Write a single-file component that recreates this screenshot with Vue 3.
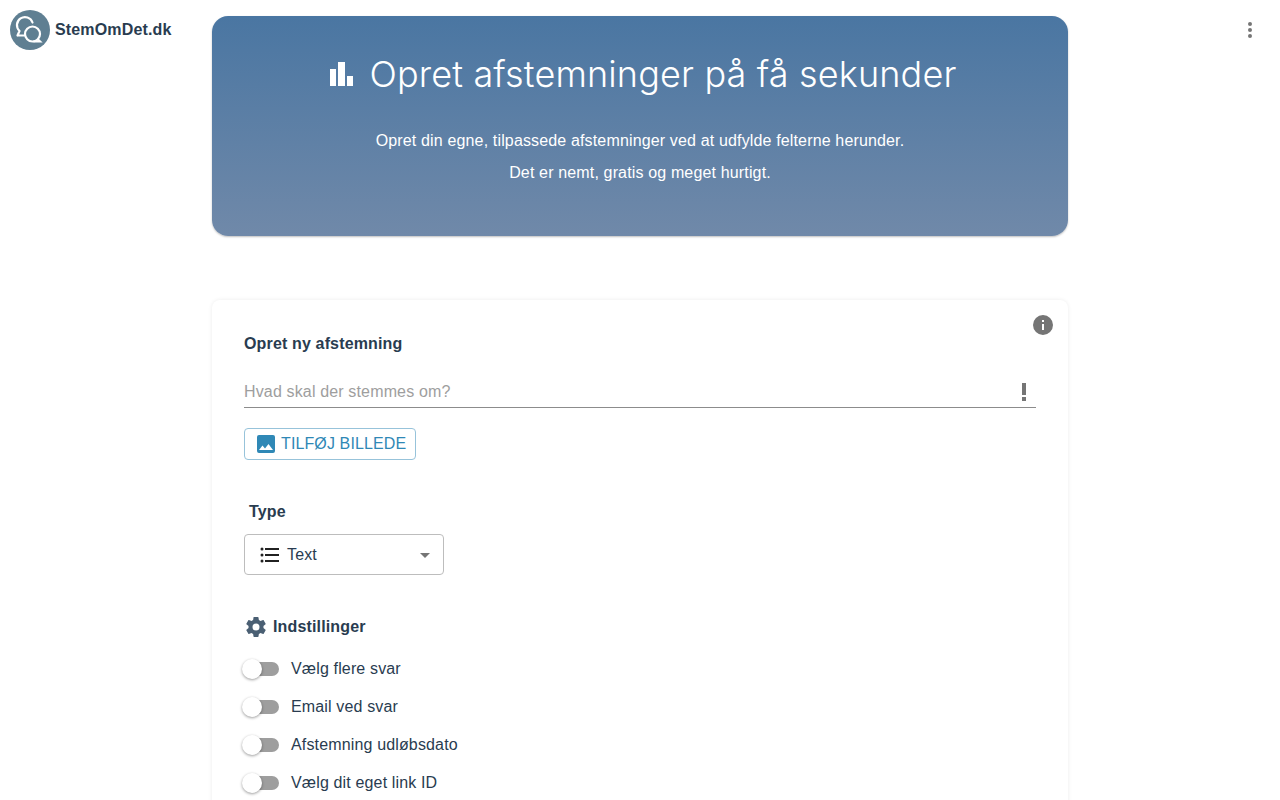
<script setup>
const toggles = ['Vælg flere svar', 'Email ved svar', 'Afstemning udløbsdato', 'Vælg dit eget link ID']
</script>

<template>
  <div class="page">
    <aside class="brand">
      <span class="logo">
        <svg viewBox="0 0 40 40" width="40" height="40">
          <circle cx="20" cy="20" r="20" fill="#5f7f92" />
          <path d="M9.500 21a8 8 0 1 1 13-8.500M7.500 25.500l2-4.500M7.500 25.500h6.500" fill="none" stroke="#fff" stroke-width="2.200" stroke-linecap="round" />
          <circle cx="22.500" cy="24" r="7.500" fill="none" stroke="#fff" stroke-width="2.200" />
          <path d="M28 29.500l2 2h-6" fill="none" stroke="#fff" stroke-width="2.200" stroke-linecap="round" />
        </svg>
      </span>
      <span class="brand-name">StemOmDet.dk</span>
    </aside>

    <main class="main">
      <section class="hero">
        <h1 class="hero-title">
          <svg viewBox="0 0 23 24" width="23" height="24"><path fill="#fff" d="M0 7h6v17H0zM8 0h7v24H8zM17 14h6v10h-6z" /></svg>
          <span>Opret afstemninger på få sekunder</span>
        </h1>
        <p class="hero-line">Opret din egne, tilpassede afstemninger ved at udfylde felterne herunder.</p>
        <p class="hero-line">Det er nemt, gratis og meget hurtigt.</p>
      </section>

      <section class="card">
        <svg class="info" viewBox="0 0 24 24" width="24" height="24"><path fill="#757575" d="M12 2a10 10 0 1 0 0 20 10 10 0 0 0 0-20zm1 15h-2v-6h2zm0-8h-2V7h2z" /></svg>
        <h2 class="card-title">Opret ny afstemning</h2>

        <div class="field">
          <span class="placeholder">Hvad skal der stemmes om?</span>
          <svg viewBox="0 0 24 24" width="24" height="24"><path fill="#757575" d="M10 3h4v12h-4zM10 17h4v4h-4z" /></svg>
        </div>

        <button class="add-image" type="button">
          <svg viewBox="0 0 24 24" width="24" height="24"><path fill="#2f88b6" d="M21 19V5a2 2 0 0 0-2-2H5a2 2 0 0 0-2 2v14a2 2 0 0 0 2 2h14a2 2 0 0 0 2-2zM8.500 13.500l2.500 3 3.500-4.500 4.500 6H5z" /></svg>
          <span>TILFØJ BILLEDE</span>
        </button>

        <h3 class="type-label">Type</h3>
        <div class="select">
          <svg viewBox="0 0 24 24" width="24" height="24"><path fill="#212121" d="M7 5h14v2H7zM7 11h14v2H7zM7 17h14v2H7z" /><circle cx="4" cy="6" r="1.500" fill="#212121" /><circle cx="4" cy="12" r="1.500" fill="#212121" /><circle cx="4" cy="18" r="1.500" fill="#212121" /></svg>
          <span class="select-text">Text</span>
          <svg class="caret" viewBox="0 0 24 24" width="24" height="24"><path fill="#757575" d="M7 10l5 5 5-5z" /></svg>
        </div>

        <div class="settings-title">
          <svg viewBox="0 0 24 24" width="24" height="24"><path fill="#4a5f73" d="M19.430 12.980c.04-.32.070-.64.070-.98s-.03-.66-.07-.98l2.110-1.650c.19-.15.240-.42.120-.64l-2-3.460c-.12-.22-.39-.3-.61-.22l-2.490 1c-.52-.4-1.080-.73-1.690-.98l-.38-2.650A.49.49 0 0 0 14 2h-4c-.25 0-.46.18-.49.420l-.38 2.650c-.61.250-1.170.59-1.690.98l-2.490-1c-.23-.09-.49 0-.61.220l-2 3.460c-.13.220-.07.490.12.640l2.110 1.650c-.04.320-.07.650-.07.980s.03.660.07.980l-2.110 1.650c-.19.150-.24.420-.12.640l2 3.460c.12.220.39.300.61.220l2.490-1c.52.400 1.080.730 1.690.980l.38 2.650c.03.240.24.420.49.420h4c.25 0 .46-.18.490-.42l.38-2.650c.61-.25 1.170-.59 1.690-.98l2.490 1c.23.090.49 0 .61-.22l2-3.460c.12-.22.070-.49-.12-.64zM12 15.500a3.500 3.500 0 1 1 0-7 3.500 3.500 0 0 1 0 7z" /></svg>
          <span>Indstillinger</span>
        </div>

        <ul class="toggles">
          <li v-for="label in toggles" :key="label" class="toggle-row">
            <span class="switch"><span class="track"></span><span class="thumb"></span></span>
            <span class="toggle-label">{{ label }}</span>
          </li>
        </ul>
      </section>
    </main>

    <aside class="actions">
      <svg viewBox="0 0 24 24" width="24" height="24"><path fill="#757575" d="M12 8a2 2 0 1 0 0-4 2 2 0 0 0 0 4zm0 2a2 2 0 1 0 0 4 2 2 0 0 0 0-4zm0 6a2 2 0 1 0 0 4 2 2 0 0 0 0-4z" /></svg>
    </aside>
  </div>
</template>

<style>
html, body { margin: 0; background: #fff; overflow: hidden; }
</style>

<style scoped>
.page {
  display: grid;
  grid-template-columns: 212px 856px 212px;
  height: 800px;
  overflow: hidden;
  font-family: "Liberation Sans", Arial, sans-serif;
  color: #293c50;
  background: #fff;
}
.brand { display: flex; align-items: center; gap: 5px; height: 40px; padding: 10px 0 0 10px; }
.logo { display: block; width: 40px; height: 40px; }
.logo svg { display: block; }
.brand-name { font-size: 16px; font-weight: 700; color: #293c50; letter-spacing: .15px; }
.main { display: flex; flex-direction: column; padding-top: 16px; }
.hero {
  box-sizing: border-box;
  height: 220px;
  padding-top: 32px;
  border-radius: 16px;
  color: #fff;
  text-align: center;
  background: linear-gradient(180deg, #4a76a2 0%, #7089a9 100%);
  box-shadow: 0 1px 2px rgba(0, 0, 0, .25);
}
.hero-title {
  display: flex;
  align-items: center;
  justify-content: center;
  gap: 16px;
  margin: 0 0 25px;
  height: 52px;
  padding-left: 7px;
  font-family: Inter, "Liberation Sans", sans-serif;
  font-size: 36px;
  font-weight: 300;
  line-height: 52px;
  letter-spacing: .15px;
}
.hero-line { margin: 0; font-size: 16px; line-height: 32px; letter-spacing: .15px; }
.card {
  position: relative;
  box-sizing: border-box;
  margin-top: 64px;
  height: 560px;
  padding: 32px 32px 0;
  border-radius: 8px;
  box-shadow: 0 0 4px rgba(0, 0, 0, .08);
  background: #fff;
}
.info { position: absolute; top: 13px; right: 13px; }
.card-title { margin: 0; font-size: 16px; font-weight: 700; line-height: 24px; letter-spacing: .15px; }
.field {
  display: flex;
  align-items: center;
  justify-content: space-between;
  box-sizing: border-box;
  height: 32px;
  margin-top: 20px;
  border-bottom: 1px solid #8c8c8c;
}
.placeholder { font-size: 16px; letter-spacing: .15px; color: #9e9e9e; }
.add-image {
  display: flex;
  align-items: center;
  gap: 3px;
  box-sizing: border-box;
  width: 172px;
  height: 32px;
  margin-top: 20px;
  padding: 0 0 0 9px;
  border: 1px solid #97c3da;
  border-radius: 4px;
  background: #fff;
  color: #2f88b6;
  font-family: inherit;
  font-size: 16px;
  letter-spacing: .12px;
}
.type-label { margin: 40px 0 0 5px; font-size: 16px; font-weight: 700; line-height: 24px; letter-spacing: .15px; }
.select {
  display: flex;
  align-items: center;
  box-sizing: border-box;
  width: 200px;
  height: 41px;
  margin-top: 10px;
  padding: 0 6px 0 13px;
  border: 1px solid #bdbdbd;
  border-radius: 4px;
  color: #293c50;
}
.select-text { flex: 1; margin-left: 5px; font-size: 16px; letter-spacing: .15px; }
.settings-title { display: flex; align-items: center; gap: 5px; margin-top: 40px; font-size: 16px; font-weight: 700; letter-spacing: .15px; }
.toggles { list-style: none; margin: 11px 0 0; padding: 0; }
.toggle-row { display: flex; align-items: center; height: 38px; }
.switch { position: relative; display: block; width: 36px; height: 20px; margin-right: 11px; flex: none; }
.track { position: absolute; left: 3px; top: 3px; width: 32px; height: 14px; border-radius: 7px; background: #9e9e9e; }
.thumb {
  position: absolute;
  left: -2px;
  top: 0;
  width: 20px;
  height: 20px;
  border-radius: 50%;
  background: #fff;
  box-shadow: 0 1px 3px rgba(0, 0, 0, .4);
}
.toggle-label { font-size: 16px; letter-spacing: .15px; }
.actions { display: flex; justify-content: flex-end; padding: 18px 18px 0 0; }
</style>
